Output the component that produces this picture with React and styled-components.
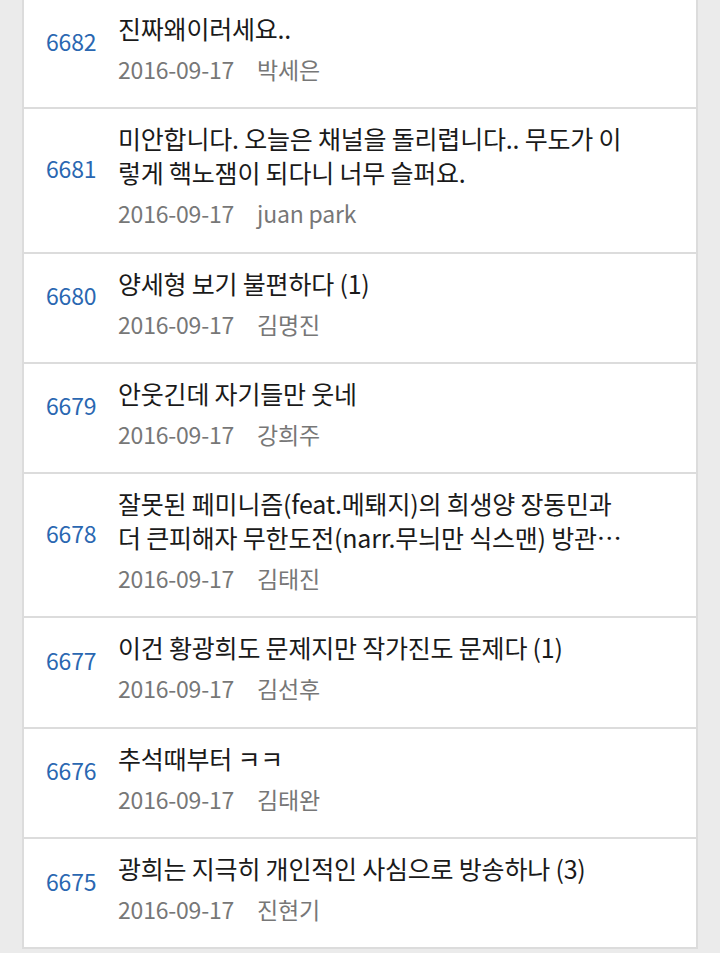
import React from 'react'
import styled, { createGlobalStyle } from 'styled-components'

const GlobalStyle = createGlobalStyle`
  html, body {
    margin: 0;
    padding: 0;
    background: #ebebeb;
  }
  body {
    font-family: "Noto Sans CJK KR", "Noto Sans", sans-serif;
  }
`

const Page = styled.div`
  padding: 0 22px 6px;
`

// list is scrolled a pixel past its first row's top
const List = styled.ul`
  list-style: none;
  margin: -1px 0 0;
  padding: 0;
  background: #fff;
  border: 2px solid #dcdcdc;
  border-top: 0;
`

const Row = styled.li`
  display: flex;
  align-items: center;
  box-sizing: border-box;
  padding: 12px 0 19.3px;
  border-bottom: 2px solid #dcdcdc;
  &:last-child {
    border-bottom: 0;
  }
`

const Num = styled.span`
  flex: 0 0 72px;
  padding-left: 22px;
  margin-bottom: 18px;
  font-size: 23px;
  letter-spacing: -0.2px;
  color: #2a67b1;
`

const Body = styled.div`
  flex: 1;
  min-width: 0;
  padding-right: 60px;
`

const Title = styled.div`
  font-size: 25px;
  line-height: 34px;
  color: #1a1a1a;
  letter-spacing: -0.2px;
  display: -webkit-box;
  -webkit-line-clamp: 2;
  -webkit-box-orient: vertical;
  overflow: hidden;
`

const Meta = styled.div`
  display: flex;
  gap: 23px;
  margin-top: 6px;
  font-size: 23px;
  line-height: 37px;
  color: #777;
  letter-spacing: -0.2px;
`

const posts = [
  { no: 6682, title: '진짜왜이러세요..', date: '2016-09-17', author: '박세은' },
  { no: 6681, title: '미안합니다. 오늘은 채널을 돌리렵니다.. 무도가 이렇게 핵노잼이 되다니 너무 슬퍼요.', date: '2016-09-17', author: 'juan park' },
  { no: 6680, title: '양세형 보기 불편하다 (1)', date: '2016-09-17', author: '김명진' },
  { no: 6679, title: '안웃긴데 자기들만 웃네', date: '2016-09-17', author: '강희주' },
  { no: 6678, title: '잘못된 페미니즘(feat.메퇘지)의 희생양 장동민과 더 큰피해자 무한도전(narr.무늬만 식스맨) 방관자들의 침묵', date: '2016-09-17', author: '김태진' },
  { no: 6677, title: '이건 황광희도 문제지만 작가진도 문제다 (1)', date: '2016-09-17', author: '김선후' },
  { no: 6676, title: '추석때부터 ㅋㅋ', date: '2016-09-17', author: '김태완' },
  { no: 6675, title: '광희는 지극히 개인적인 사심으로 방송하나 (3)', date: '2016-09-17', author: '진현기' },
]

export default function App() {
  return (
    <Page>
      <GlobalStyle />
      <List>
        {posts.map((p) => (
          <Row key={p.no}>
            <Num>{p.no}</Num>
            <Body>
              <Title>{p.title}</Title>
              <Meta>
                <span>{p.date}</span>
                <span>{p.author}</span>
              </Meta>
            </Body>
          </Row>
        ))}
      </List>
    </Page>
  )
}
